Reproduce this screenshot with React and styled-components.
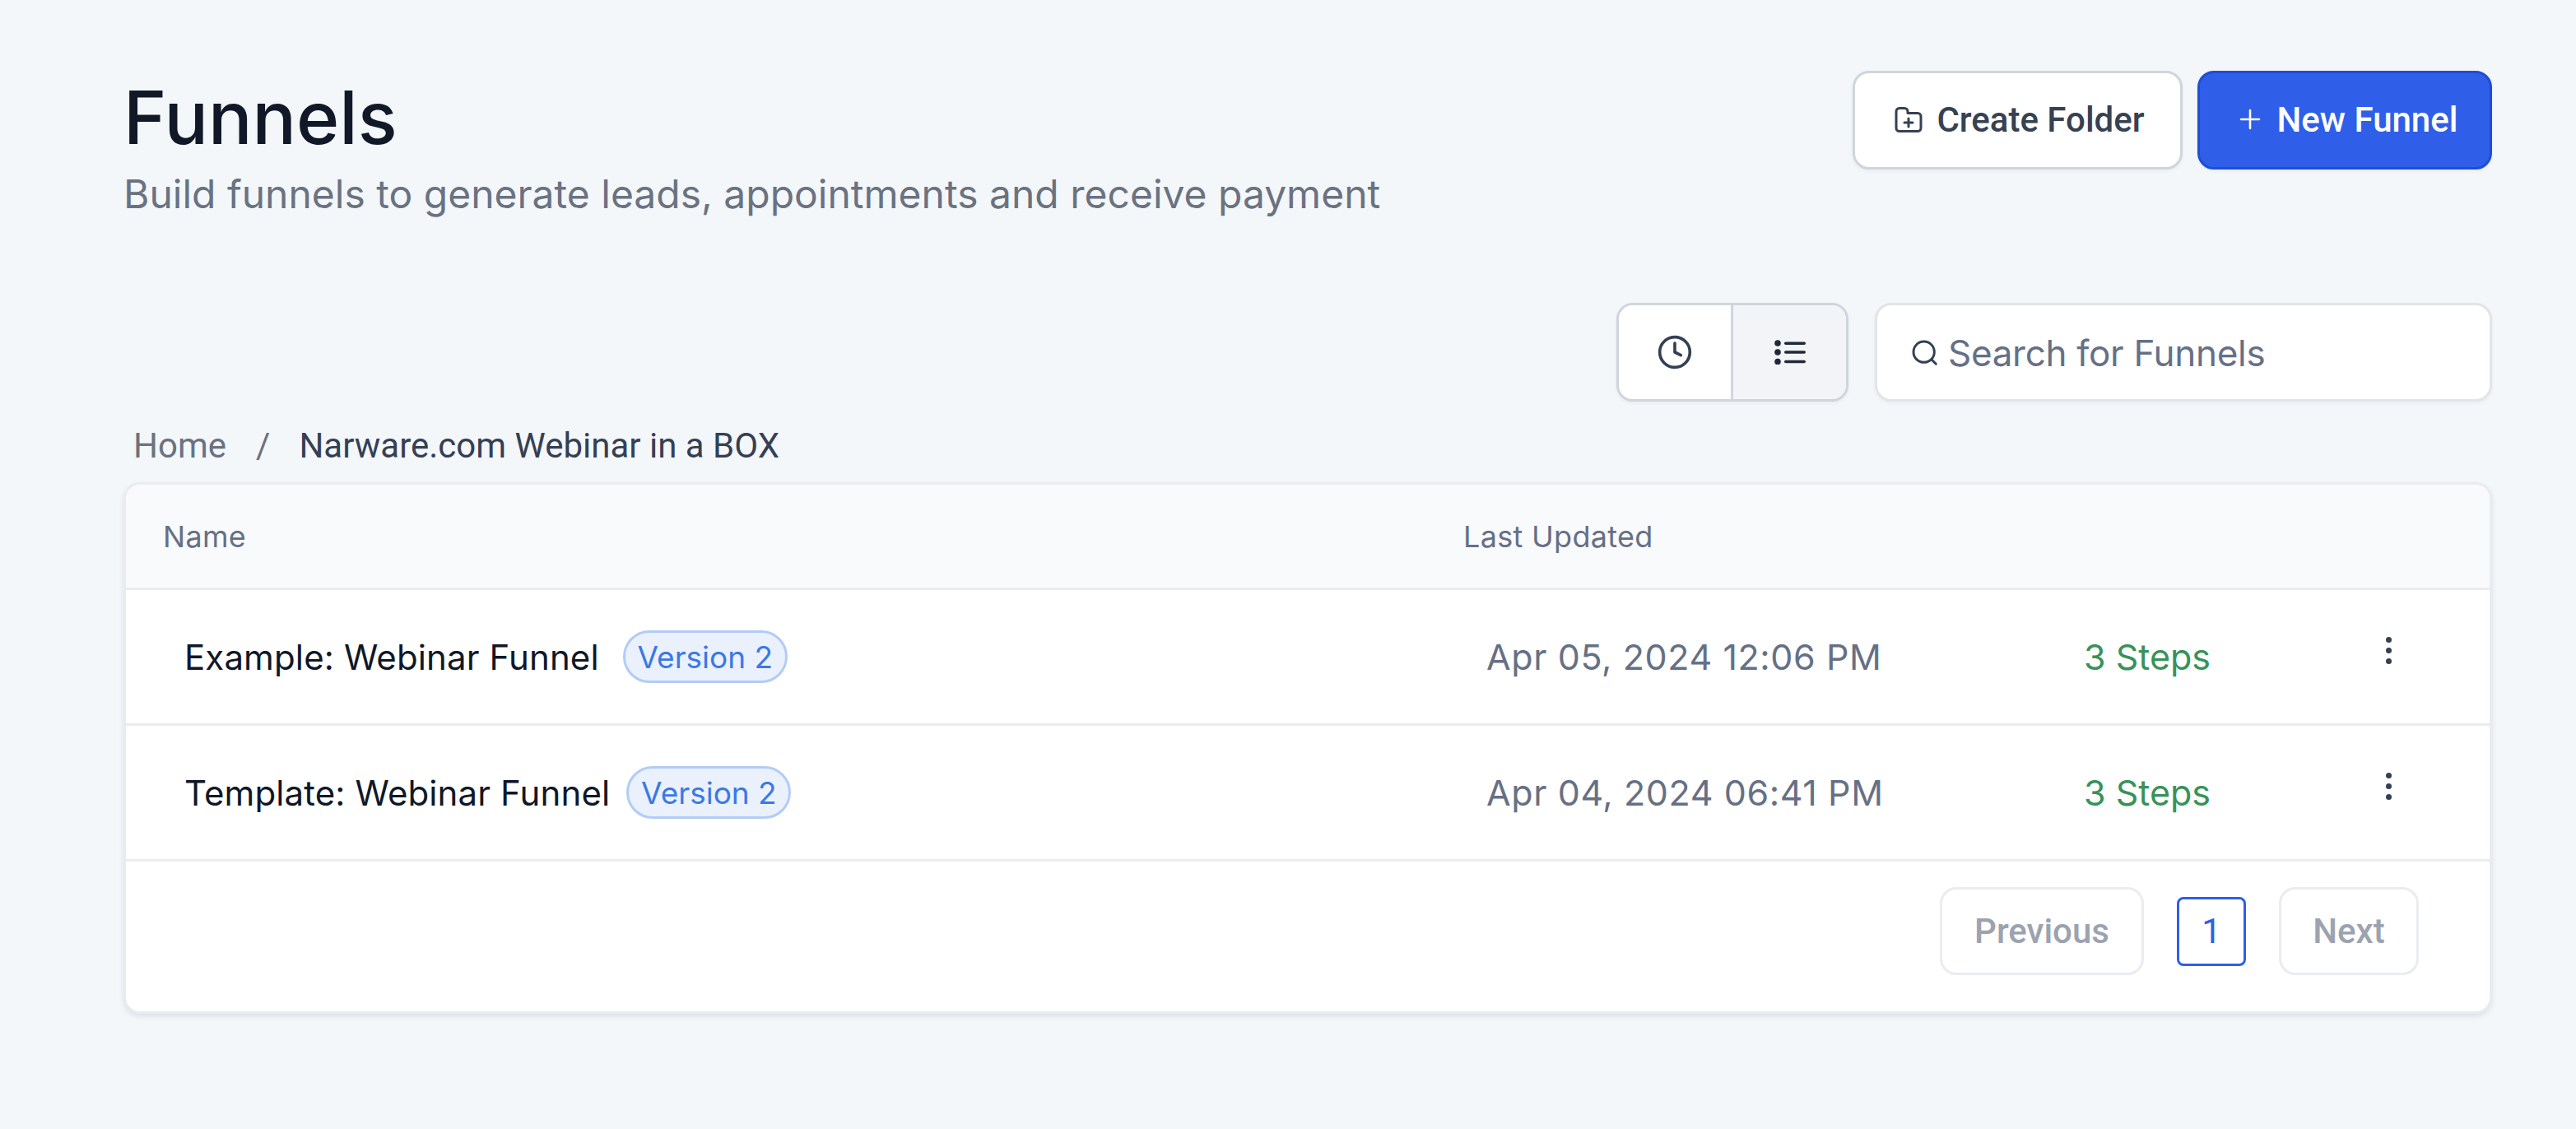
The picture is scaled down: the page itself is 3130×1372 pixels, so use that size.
import React from 'react'
import styled, { createGlobalStyle } from 'styled-components'

const GlobalStyle = createGlobalStyle`
  html, body {
    margin: 0;
    padding: 0;
    background: #f4f7fa;
  }
  body {
    font-family: Inter, "Liberation Sans", sans-serif;
    -webkit-font-smoothing: antialiased;
  }
  * { box-sizing: border-box; }
`

const Page = styled.main`
  width: 3130px;
  height: 1372px;
  padding: 86px 102px 0 150px;
`

const Header = styled.header`
  display: flex;
  justify-content: space-between;
  align-items: flex-start;
`

const Title = styled.h1`
  margin: 0;
  font-size: 89px;
  line-height: 58px;
  padding: 28px 0 0;
  font-weight: 500;
  color: #111827;
`

const Subtitle = styled.p`
  margin: 34px 0 0;
  font-size: 48px;
  line-height: 60px;
  font-weight: 400;
  color: #6b7280;
`

const Actions = styled.div`
  display: flex;
  gap: 18px;
`

const Button = styled.button`
  display: flex;
  align-items: center;
  justify-content: center;
  gap: ${p => (p.$primary ? '20px' : '17px')};
  height: 120px;
  width: ${p => p.$width};
  padding: 0 0 2px ${p => (p.$primary ? '9px' : '5px')};
  border-radius: 20px;
  border: 3px solid ${p => (p.$primary ? '#1d4ed8' : '#d0d5dd')};
  background: ${p => (p.$primary ? '#2f5fe8' : '#fff')};
  color: ${p => (p.$primary ? '#fff' : '#374151')};
  font-family: Roboto, sans-serif;
  font-size: 42px;
  font-weight: 500;
  box-shadow: 0 2px 4px rgba(16, 24, 40, 0.05);
`

const Toolbar = styled.div`
  display: flex;
  justify-content: flex-end;
  gap: 32px;
  margin-top: 102px;
`

const Toggle = styled.div`
  display: flex;
  height: 120px;
  border: 3px solid #d0d5dd;
  border-radius: 20px;
  overflow: hidden;
  background: #fff;
  box-shadow: 0 2px 4px rgba(16, 24, 40, 0.05);
`

const ToggleItem = styled.div`
  width: ${p => p.$width};
  display: flex;
  align-items: center;
  justify-content: center;
  color: #344054;
  background: ${p => (p.$active ? '#f2f4f8' : '#fff')};
  border-left: ${p => (p.$active ? '3px solid #d0d5dd' : 'none')};
`

const Search = styled.div`
  width: 750px;
  height: 120px;
  display: flex;
  align-items: center;
  gap: 12px;
  padding: 2px 0 0 42px;
  background: #fff;
  border: 3px solid #e2e4ea;
  border-radius: 20px;
  font-size: 44px;
  letter-spacing: -0.3px;
  color: #667085;
  box-shadow: 0 2px 4px rgba(16, 24, 40, 0.05);
`

const Breadcrumb = styled.nav`
  display: flex;
  align-items: center;
  height: 50px;
  margin-top: 28px;
  padding-left: 12px;
  font-family: Roboto, sans-serif;
  font-size: 42px;
  color: #6b7280;
`

const Slash = styled.span`
  margin: 0 35px 0 36px;
`

const Current = styled.span`
  color: #344054;
`

const Card = styled.section`
  margin-top: 20px;
  background: #fff;
  border: 3px solid #e9ebf0;
  border-radius: 20px;
  overflow: hidden;
  box-shadow: 0 3px 6px rgba(16, 24, 40, 0.1);
`

const HeadRow = styled.div`
  display: grid;
  grid-template-columns: 1580px 1fr;
  align-items: center;
  height: 128px;
  padding-left: 45px;
  background: #f9fafb;
  border-bottom: 3px solid #eaecf0;
  font-size: 36px;
  font-weight: 400;
  letter-spacing: 0.3px;
  color: #667085;
`

const Row = styled.div`
  display: grid;
  grid-template-columns: 1582px 726px 366px 1fr;
  align-items: center;
  height: 165px;
  padding-left: 71px;
  border-bottom: 3px solid #eaecf0;
`

const NameCell = styled.div`
  display: flex;
  align-items: center;
  gap: ${p => p.$gap};
  font-size: 42px;
  font-weight: 400;
  letter-spacing: 0.12px;
  color: #101828;
`

const Badge = styled.span`
  display: flex;
  align-items: center;
  justify-content: center;
  width: 200px;
  height: 64px;
  border-radius: 32px;
  border: 3px solid #b2ccf8;
  background: #eaf1fd;
  color: #3b78e7;
  font-size: 37px;
  font-weight: 400;
  letter-spacing: 0;
`

const DateCell = styled.div`
  font-size: 43px;
  letter-spacing: 0.6px;
  font-weight: 400;
  color: #667085;
`

const Steps = styled.div`
  font-size: 43px;
  font-weight: 400;
  color: #38925a;
`

const Menu = styled.div`
  display: flex;
  flex-direction: column;
  align-items: center;
  gap: 6px;
  width: 8px;
  margin-top: -16px;
`

const Dot = styled.span`
  width: 7px;
  height: 7px;
  border-radius: 50%;
  background: #344054;
`

const Pagination = styled.div`
  display: flex;
  justify-content: flex-end;
  align-items: center;
  gap: 40px;
  height: 182px;
  padding: 0 86px 13px 0;
`

const PageButton = styled.div`
  display: flex;
  align-items: center;
  justify-content: center;
  width: ${p => p.$width};
  height: 107px;
  border: 3px solid #eaecf0;
  border-radius: 20px;
  font-family: Roboto, sans-serif;
  color: #9ca3af;
  font-size: 42px;
  font-weight: 500;
`

const PageNumber = styled.div`
  display: flex;
  align-items: center;
  justify-content: center;
  width: 84px;
  height: 84px;
  border: 3px solid #2f5fe8;
  border-radius: 8px;
  font-family: Roboto, sans-serif;
  color: #2f5fe8;
  font-size: 42px;
`

const FolderPlusIcon = () => (
  <svg width="34" height="31" viewBox="0 0 34 31" fill="none" stroke="currentColor" strokeWidth="3" strokeLinecap="round" strokeLinejoin="round">
    <path d="M2 8V5.5A4 4 0 0 1 6 1.5h6a4 4 0 0 1 4 4v2h12a4 4 0 0 1 4 4V25.500a4 4 0 0 1-4 4H6a4 4 0 0 1-4-4Z" />
    <path d="M17 14v10M12 19h10" />
  </svg>
)

const PlusIcon = () => (
  <svg width="26" height="26" viewBox="0 0 26 26" fill="none" stroke="currentColor" strokeWidth="2.6" strokeLinecap="round">
    <path d="M13 2v22M2 13h22" />
  </svg>
)

const ClockIcon = () => (
  <svg width="44" height="44" viewBox="0 0 24 24" fill="none" stroke="currentColor" strokeWidth="2" strokeLinecap="round" strokeLinejoin="round">
    <circle cx="12" cy="12" r="10" />
    <path d="M12 6v6l4 2" />
  </svg>
)

const ListIcon = () => (
  <svg width="38" height="30" viewBox="0 0 38 30" fill="#1f2937" stroke="none">
    <circle cx="4" cy="4" r="3.8" />
    <circle cx="4" cy="15" r="3.8" />
    <circle cx="4" cy="26.500" r="3.8" />
    <rect x="12" y="2.500" width="26" height="3.500" rx="1.750" />
    <rect x="12" y="13.300" width="26" height="3.500" rx="1.750" />
    <rect x="12" y="24.700" width="26" height="3.500" rx="1.750" />
  </svg>
)

const SearchIcon = () => (
  <svg width="32" height="32" viewBox="0 0 24 24" fill="none" stroke="#344054" strokeWidth="2.200" strokeLinecap="round">
    <circle cx="11" cy="11" r="9.500" />
    <path d="M22 22l-4-4" />
  </svg>
)

const rows = [
  { name: 'Example: Webinar Funnel', gap: '29px', date: 'Apr 05, 2024 12:06 PM' },
  { name: 'Template: Webinar Funnel', gap: '20px', date: 'Apr 04, 2024 06:41 PM' },
]

export default function App() {
  return (
    <Page>
      <GlobalStyle />
      <Header>
        <div>
          <Title>Funnels</Title>
          <Subtitle>Build funnels to generate leads, appointments and receive payment</Subtitle>
        </div>
        <Actions>
          <Button $width="401px"><FolderPlusIcon /> Create Folder</Button>
          <Button $primary $width="358px"><PlusIcon /> New Funnel</Button>
        </Actions>
      </Header>

      <Toolbar>
        <Toggle>
          <ToggleItem $width="136px"><ClockIcon /></ToggleItem>
          <ToggleItem $active $width="140px"><ListIcon /></ToggleItem>
        </Toggle>
        <Search><SearchIcon /> Search for Funnels</Search>
      </Toolbar>

      <Breadcrumb>
        Home<Slash>/</Slash><Current>Narware.com Webinar in a BOX</Current>
      </Breadcrumb>

      <Card>
        <HeadRow>
          <span>Name</span>
          <span>Last Updated</span>
        </HeadRow>
        {rows.map(row => (
          <Row key={row.name}>
            <NameCell $gap={row.gap}>
              {row.name}
              <Badge>Version 2</Badge>
            </NameCell>
            <DateCell>{row.date}</DateCell>
            <Steps>3 Steps</Steps>
            <Menu>
              <Dot />
              <Dot />
              <Dot />
            </Menu>
          </Row>
        ))}
        <Pagination>
          <PageButton $width="248px">Previous</PageButton>
          <PageNumber>1</PageNumber>
          <PageButton $width="170px">Next</PageButton>
        </Pagination>
      </Card>
    </Page>
  )
}
